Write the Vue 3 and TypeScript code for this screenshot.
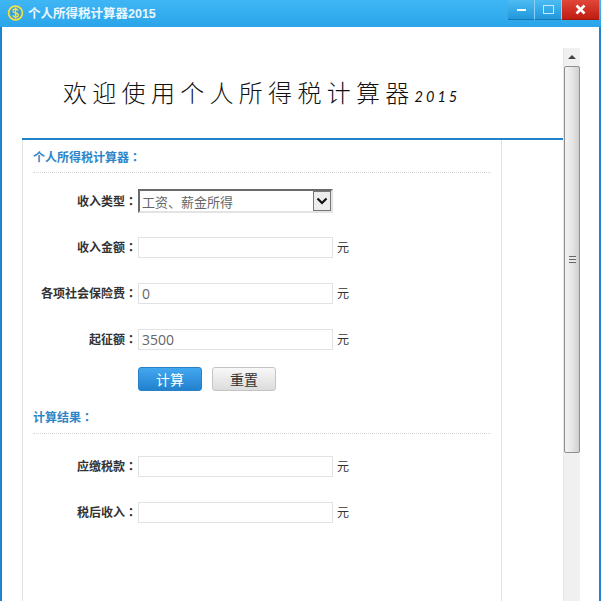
<script setup lang="ts">
interface Row { label: string; value: string }
const top: Row[] = [
  { label: '收入金额', value: '' },
  { label: '各项社会保险费', value: '0' },
  { label: '起征额', value: '3500' },
]
const result: Row[] = [
  { label: '应缴税款', value: '' },
  { label: '税后收入', value: '' },
]
</script>

<template>
  <div class="window">
    <header class="titlebar">
      <svg class="logo" width="18" height="18" viewBox="0 0 18 18">
        <circle cx="8.5" cy="9" r="6.9" fill="#3a9fd8" stroke="#f3e04a" stroke-width="1.7" />
        <path d="M11.2 6.5C10.6 5.4 9.6 5 8.5 5 7 5 6 5.8 6 7c0 2.6 5.4 1.400 5.400 4.100 0 1.200-1.100 2-2.700 2-1.300 0-2.300-.6-2.900-1.700M8.600 3.500v11" fill="none" stroke="#f3e04a" stroke-width="1.300" />
      </svg>
      <span class="app-title">个人所得税计算器2015</span>
      <div class="controls">
        <div class="ctl"><i class="min"></i></div>
        <div class="ctl"><i class="max"></i></div>
        <div class="ctl close">
          <svg width="11" height="11" viewBox="0 0 11 11"><path d="M1.500 1.500l8 8M9.500 1.500l-8 8" stroke="#fff" stroke-width="2.600" /></svg>
        </div>
      </div>
    </header>
    <div class="client">
      <main class="page">
        <div class="banner"><span class="hand">欢迎使用个人所得税计算器<small>2015</small></span></div>
        <section class="panel">
          <h2 class="heading first">个人所得税计算器<span class="colon">：</span></h2>
          <div class="form-row select-row">
            <label>收入类型<span class="colon">：</span></label>
            <div class="select">
              <span>工资、薪金所得</span>
              <b class="arrow"><svg width="12" height="8" viewBox="0 0 12 8"><path d="M1.500 1.500L6 6l4.500-4.500" fill="none" stroke="#111" stroke-width="2.200" /></svg></b>
            </div>
          </div>
          <div v-for="r in top" :key="r.label" class="form-row">
            <label>{{ r.label }}<span class="colon">：</span></label>
            <div class="input">{{ r.value }}</div>
            <span class="unit">元</span>
          </div>
          <div class="buttons">
            <button class="btn primary">计算</button>
            <button class="btn">重置</button>
          </div>
          <h2 class="heading second">计算结果<span class="colon">：</span></h2>
          <div class="results">
            <div v-for="r in result" :key="r.label" class="form-row">
              <label>{{ r.label }}<span class="colon">：</span></label>
              <div class="input">{{ r.value }}</div>
              <span class="unit">元</span>
            </div>
          </div>
        </section>
      </main>
      <aside class="scrollbar">
        <div class="up"><i></i></div>
        <div class="thumb"><span class="grip"></span></div>
      </aside>
    </div>
  </div>
</template>

<style>
html, body { margin: 0; background: #fff; }
</style>

<style scoped>
.window { width: 601px; height: 601px; overflow: hidden; display: flex; flex-direction: column; font-family: "Liberation Sans", "Noto Sans CJK SC", sans-serif; }
.titlebar { height: 27px; flex: none; display: flex; align-items: center; background: linear-gradient(#3fb6f4, #2aa5ea); }
.logo { margin-left: 7px; margin-top: -2px; }
.app-title { margin-left: 3px; margin-top: -2px; color: #eaf7ff; font-size: 12.500px; font-weight: 700; }
.controls { margin-left: auto; margin-right: 2px; align-self: flex-start; display: flex; height: 20px; }
.ctl { width: 27px; height: 20px; display: flex; align-items: center; justify-content: center; background: linear-gradient(#4dbcf3, #2198dc); border-right: 1px solid #8ad3f8; box-sizing: border-box; border-bottom: 1px solid #1678b8; }
.ctl.close { width: 37px; background: linear-gradient(#e0473a, #bf1d10); border: 0; border-bottom: 1px solid #a01810; }
.min { width: 9px; height: 2px; background: #f2fbff; }
.max { width: 9px; height: 7px; border: 1.500px solid #bfe9ff; }
.client { flex: 1; min-height: 0; display: flex; background: #fff; border-left: 2px solid #1b84cc; border-right: 2px solid #1b84cc; }
.page { width: 561px; flex: none; padding-left: 20px; box-sizing: border-box; }
.banner { height: 111px; border-bottom: 2px solid #2184cb; display: flex; align-items: center; }
.hand { margin-left: 41px; margin-top: 18px; font-family: "Noto Sans CJK SC", sans-serif; font-weight: 300; font-size: 24px; letter-spacing: 5.300px; color: #111; white-space: nowrap; }
.hand small { font-size: 14.500px; letter-spacing: 3px; font-family: "Lato", sans-serif; font-weight: 400; font-style: italic; }
.panel { width: 480px; height: 480px; box-sizing: border-box; border-left: 1px solid #e2e2e2; border-right: 1px solid #e2e2e2; padding: 0 10px; }
.heading { margin: 0; font-size: 12px; font-weight: 700; line-height: 17px; color: #2e86c8; border-bottom: 1px dotted #d4d4d4; padding-bottom: 5px; }
.heading.first { padding-top: 10px; }
.heading.second { margin-top: 19px; padding-bottom: 6px; }
.colon { font-family: "Noto Sans CJK TC", sans-serif; line-height: 0; }
.form-row { display: flex; align-items: center; height: 21px; margin-top: 25px; }
.form-row label { width: 104px; margin-right: 1px; margin-top: 2px; flex: none; text-align: right; font-size: 12px; line-height: 17px; font-weight: 700; color: #333; white-space: nowrap; }
.select-row { height: 24px; margin-top: 16px; margin-bottom: -1px; }
.select { width: 195px; height: 24px; box-sizing: border-box; border: 2px solid #e3e3e3; border-top-color: #6a6a6a; border-left-color: #6a6a6a; display: flex; align-items: center; justify-content: space-between; font-size: 13px; color: #666; padding-left: 2px; }
.arrow { width: 18px; height: 20px; border: 1px solid #777; background: #ececec; box-sizing: border-box; display: flex; align-items: center; justify-content: center; }
.input { width: 195px; height: 21px; box-sizing: border-box; border: 1px solid #e2e2e2; font-size: 14px; line-height: 20px; color: #666; padding-left: 3px; font-family: "Open Sans", "Noto Sans", sans-serif; }
.unit { margin-left: 4px; margin-bottom: 2px; font-size: 12px; color: #333; }
.buttons { display: flex; gap: 10px; margin-top: 17px; margin-left: 105px; }
.btn { width: 64px; height: 24px; padding: 0; border: 1px solid #c4c4c4; border-radius: 3px; font-family: inherit; font-size: 14px; color: #333; background: linear-gradient(#f8f8f8, #dcdcdc); }
.primary { color: #fff; border-color: #2a80c4; background: linear-gradient(#43a7f0, #2281cd); }
.results .form-row:first-child { margin-top: 22px; }
.scrollbar { width: 17px; margin-top: 21px; background: #f0f0f0; border-left: 1px solid #e6e6e6; box-sizing: border-box; display: flex; flex-direction: column; }
.up { height: 18px; flex: none; display: flex; align-items: center; justify-content: center; }
.up i { width: 0; height: 0; border-left: 4px solid transparent; border-right: 4px solid transparent; border-bottom: 4px solid #444; }
.thumb { height: 387px; flex: none; box-sizing: border-box; border: 1px solid #8f8f8f; border-radius: 2px; background: linear-gradient(90deg, #f3f3f3, #e6e6e6 50%, #cfcfcf); display: flex; align-items: center; justify-content: center; }
.grip { width: 7px; height: 7px; background: repeating-linear-gradient(#666 0 1px, #e8e8e8 1px 3px); }
</style>
